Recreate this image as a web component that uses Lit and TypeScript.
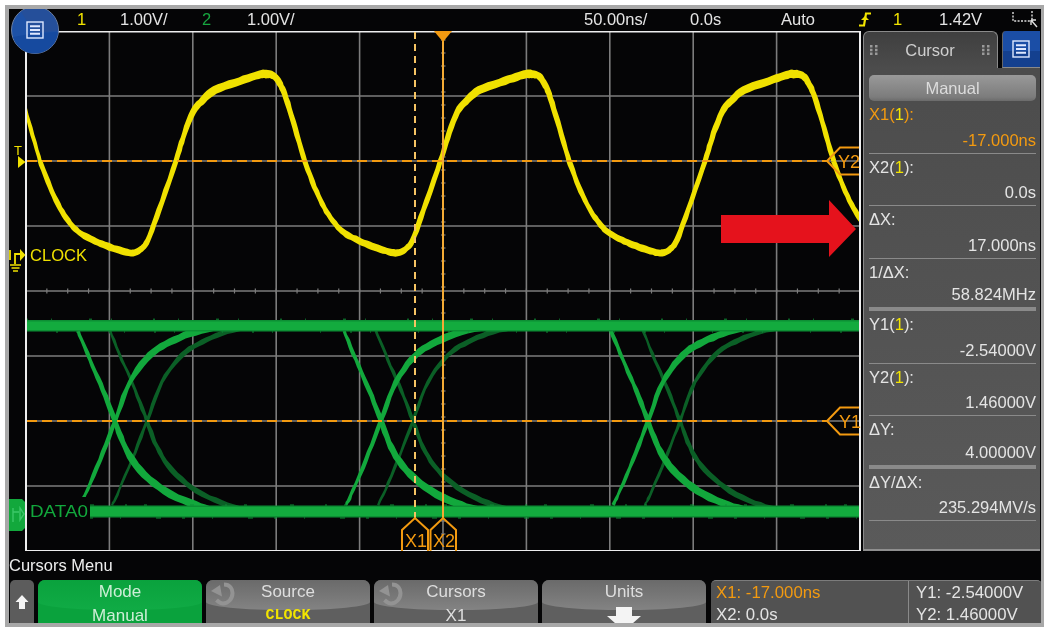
import { LitElement, html, svg, css } from 'lit';
import { customElement } from 'lit/decorators.js';

type Pt = [number, number, number];

// samples a catmull-rom through the points and outlines it with the width of
// each point, plus a bit of jitter so the edge looks like sampled scope data
function ribbon(pts: Pt[], dx = 0, fuzz = 0.3): string {
  const mid: Pt[] = [];
  let seed = 7 + Math.round(dx);
  const rnd = () => {
    seed = (seed * 1103515 + 12345) % 65536;
    return (seed / 65536 - 0.5) * 2 * fuzz;
  };
  for (let i = 0; i < pts.length - 1; i++) {
    const a = pts[i - 1] ?? pts[i];
    const b = pts[i];
    const c = pts[i + 1];
    const e = pts[i + 2] ?? c;
    for (let s = 0; s < 5; s++) {
      const t = s / 5;
      const f = (n: number) =>
        0.5 * (2 * b[n] + (c[n] - a[n]) * t + (2 * a[n] - 5 * b[n] + 4 * c[n] - e[n]) * t * t +
          (3 * b[n] - a[n] - 3 * c[n] + e[n]) * t * t * t);
      mid.push([f(0) + dx, f(1), b[2] + (c[2] - b[2]) * t]);
    }
  }
  const last = pts[pts.length - 1];
  mid.push([last[0] + dx, last[1], last[2]]);
  const left: string[] = [];
  const right: string[] = [];
  mid.forEach((p, i) => {
    const q = mid[Math.min(i + 1, mid.length - 1)];
    const o = mid[Math.max(i - 1, 0)];
    const nx = q[0] - o[0];
    const ny = q[1] - o[1];
    const len = Math.hypot(nx, ny) || 1;
    const h1 = p[2] / 2 + rnd();
    const h2 = p[2] / 2 + rnd();
    left.push(`${(p[0] - (ny / len) * h1).toFixed(1)} ${(p[1] + (nx / len) * h1).toFixed(1)}`);
    right.unshift(`${(p[0] + (ny / len) * h2).toFixed(1)} ${(p[1] - (nx / len) * h2).toFixed(1)}`);
  });
  return `M${left.join('L')}L${right.join('L')}Z`;
}

const scaled = (pts: Pt[], k: number) => pts.map(([x, y, w]) => [x, y, w * k] as Pt);

const PERIOD = 264.5;
const CLOCK: Pt[] = [
  [40, 161, 5], [50, 187, 5], [60, 208, 5], [70, 223, 5.4], [80, 233, 6], [93, 240, 6.5], [107, 246, 7],
  [122, 251, 7], [133, 253, 7], [141, 249, 6], [148, 240, 5.4], [159, 210, 5], [176, 161, 5], [183, 138, 5.2],
  [193, 112, 6], [203, 100, 7], [215, 90, 8], [240, 81, 8], [258, 75, 8], [266, 74, 8.5], [274, 76, 7],
  [280, 84, 6], [286, 98, 5.5], [295, 128, 5],
];

const FALL: Pt[] = [
  [78, 331, 3.5], [90, 360, 4], [103, 390, 4.5], [115, 421, 5], [125, 447, 6], [140, 470, 7],
  [165, 491, 7.5], [195, 505, 7.5], [215, 510, 6],
];
const RISE: Pt[] = [
  [80, 505, 3], [85, 495, 3.5], [100, 460, 4], [115, 421, 4.2], [130, 382, 5], [150, 355, 6.5],
  [170, 342, 7], [195, 332, 7], [225, 326, 5],
];

const VERT = [26, 109.4, 192.8, 276.2, 359.6, 443, 526.4, 609.8, 693.2, 776.6, 860];
const HORZ = [96, 161, 226, 291, 356, 421, 486];
const H_TICKS = Array.from({ length: 40 }, (_, i) => 26 + i * 20.85);
const V_TICKS = Array.from({ length: 39 }, (_, i) => 40 + i * 13);

const ROWS = [
  { label: html`<span class="or">X1(<i>1</i>):</span>`, value: '-17.000ns', orange: true },
  { label: html`X2(<i>1</i>):`, value: '0.0s' },
  { label: html`ΔX:`, value: '17.000ns' },
  { label: html`1/ΔX:`, value: '58.824MHz', thick: true },
  { label: html`Y1(<i>1</i>):`, value: '-2.54000V' },
  { label: html`Y2(<i>1</i>):`, value: '1.46000V' },
  { label: html`ΔY:`, value: '4.00000V', thick: true },
  { label: html`ΔY/ΔX:`, value: '235.294MV/s' },
];

const menuIcon = (cls: string) => html`<svg class=${cls} viewBox="0 0 18 18">
  <rect x="1" y="1" width="16" height="16" fill="none" stroke="#dfe8ff" stroke-width="1.4" />
  <path d="M4 5.3h10M4 9h10M4 12.7h10" stroke="#dfe8ff" stroke-width="2" />
</svg>`;

const rotary = html`<svg class="rotary" viewBox="0 0 26 26">
  <path d="M14 3.5C20 3.5 22.5 8 22.5 12C22.5 18 18 22.5 13 22.5C10.5 22.5 8.5 21 6.5 19" fill="none" stroke="#939393" stroke-width="4" />
  <path d="M1 10L10 4L12 15.5Z" fill="#939393" />
</svg>`;

const grip = html`<svg class="grip" viewBox="0 0 8 10">
  <path d="M0 0h2.5v2.5H0zM5 0h2.5v2.5H5zM0 3.8h2.5v2.5H0zM5 3.8h2.5v2.5H5zM0 7.5h2.5V10H0zM5 7.5h2.5V10H5z" fill="#9a9a9a" />
</svg>`;

@customElement('app-root')
export class AppRoot extends LitElement {
  static styles = css`
    :host {
      display: block;
      width: 1050px;
      height: 631px;
      background: #fff;
      padding: 5px 6px 4px 5px;
      box-sizing: border-box;
      font-family: 'Liberation Sans', Arial, sans-serif;
      color: #e4e4e4;
      font-size: 16.5px;
    }
    .frame {
      position: relative;
      height: 622px;
      box-sizing: border-box;
      border: 4px solid #a8a8a8;
      border-right-width: 3px;
      background: #050506;
      overflow: hidden;
      display: grid;
      grid-template-rows: 22px 520px 29px 43px;
      filter: blur(0.35px);
    }
    .status {
      display: grid;
      grid-template-columns: 43px 82px 45px 337px 106px 91px 77px 35px 46px 73px 30px;
      padding: 0 0 4px 68px;
      align-items: center;
      font-size: 16.5px;
      white-space: nowrap;
    }
    .status svg { display: block; }
    .y { color: #f2e400; }
    .g { color: #17a53f; }
    .main { display: flex; gap: 2px; }
    .plot { display: block; width: 852px; height: 520px; flex: none; }
    .plot text { font-family: 'Liberation Sans', Arial, sans-serif; }
    .menu-btn {
      position: absolute;
      left: 2px;
      top: -3px;
      width: 48px;
      height: 48px;
    }
    .panel {
      width: 177px;
      flex: none;
      box-sizing: border-box;
      border-left: 1.5px solid #8a8a8a;
      border-bottom: 2px solid #8f8f8f;
      display: flex;
      flex-direction: column;
    }
    .tabs { display: flex; height: 37px; flex: none; margin-left: -1.5px; background: #050506; }
    .tab {
      width: 135px;
      box-sizing: border-box;
      display: flex;
      align-items: center;
      justify-content: space-between;
      padding: 0 6px;
      color: #cfcfcf;
      border: 1.5px solid #8a8a8a;
      border-bottom: none;
      border-radius: 6px 6px 0 0;
      background: linear-gradient(#3f3f3f, #4c4c4c);
    }
    .grip { width: 8px; height: 10px; }
    .blue-tab {
      margin-left: 4px;
      flex: 1;
      display: flex;
      align-items: center;
      justify-content: center;
      background: linear-gradient(#1b4ea6 55%, #14408f 55%);
      border-bottom: 1.5px solid #8a8a8a;
      border-left: 1.5px solid #666;
      border-radius: 4px 0 0 0;
    }
    .blue-icon { width: 18px; height: 18px; }
    .strip {
      background: linear-gradient(#4c4c4c, #535353 50%, #5a5a5a);
      flex: 1;
      display: flex;
      flex-direction: column;
      padding: 0 4px 0 5px;
    }
    .manual {
      margin-top: 7px;
      height: 26px;
      flex: none;
      box-sizing: border-box;
      display: flex;
      align-items: center;
      justify-content: center;
      border-radius: 5px;
      color: #dcdcdc;
      background: linear-gradient(#999, #7c7c7c 85%, #6b6b6b);
    }
    .row {
      height: 52.5px;
      flex: none;
      box-sizing: border-box;
      border-bottom: 1.5px solid #8a8a8a;
      display: flex;
      flex-direction: column;
      justify-content: space-between;
      padding: 3px 0 3px;
      line-height: 20px;
    }
    .row.thick { border-bottom: 4px solid #8a8a8a; }
    .row i { font-style: normal; color: #f2e400; }
    .row .or { color: #f39a10; }
    .value { text-align: right; }
    .value.or { color: #f39a10; }
    .title { display: flex; align-items: center; color: #eee; }
    .keys { display: flex; gap: 4px; padding: 0 0 0 1px; }
    .back {
      width: 24px;
      flex: none;
      display: flex;
      align-items: center;
      justify-content: center;
      background: #5c5c5c;
      border-radius: 5px 5px 0 0;
    }
    .back svg { width: 14px; height: 16px; }
    .key {
      position: relative;
      width: 164px;
      flex: none;
      box-sizing: border-box;
      height: 43px;
      border-radius: 7px 7px 0 0;
      background: #5f5f5f;
      text-align: center;
      line-height: 24px;
      color: #dedede;
      font-size: 17px;
    }
    .key::before {
      content: '';
      position: absolute;
      left: 0;
      right: 0;
      top: 0;
      height: 30px;
      border-radius: 7px 7px 50% 50% / 7px 7px 8px 8px;
      background: linear-gradient(#6a6a6a, #838383);
    }
    .key.on { background: #0aa23d; color: #cdeed6; }
    .key.on::before { background: linear-gradient(#0aa23d, #10ab45); }
    .key > * { position: relative; }
    .key > div { display: block; }
    .key > .low { line-height: 15px; margin-top: 4px; }
    .key > .rotary { position: absolute; left: 4px; top: 1px; width: 26px; height: 26px; }
    .clock { font-family: 'Liberation Mono', monospace; font-weight: bold; color: #f2e400; font-size: 15px; }
    .down { display: block; margin: 3px auto 0; width: 36px; height: 16px; }
    .read {
      flex: 1;
      margin-left: 1px;
      height: 43px;
      box-sizing: border-box;
      display: flex;
      background: #525252;
      border-radius: 5px 5px 0 0;
      border-top: 1.5px solid #7c7c7c;
      line-height: 23px;
      font-size: 16.8px;
    }
    .read > div { padding: 0 0 0 5px; white-space: nowrap; }
    .read .a { width: 198px; box-sizing: border-box; border-right: 1.5px solid #8a8a8a; }
    .read .b { padding-left: 7px; }
    .read .or { color: #f39a10; }
    .read .low { line-height: 15px; margin-top: 3px; }
  `;

  private plot() {
    const eyes = [0, 266, 533];
    const dimFall = scaled(FALL, 0.72);
    const dimRise = scaled(RISE, 0.72);
    return svg`
      <defs><clipPath id="scr"><rect x="26" y="31" width="834" height="520" /></clipPath></defs>
      <g stroke="#7c7c7c" stroke-width="1.6" fill="none">
        ${VERT.slice(1, 10).map((x) => svg`<path d="M${x} 31V551" />`)}
        ${HORZ.map((y) => svg`<path d="M26 ${y}H860" />`)}
        ${H_TICKS.map((x) => svg`<path d="M${x} 288.5V293.5" stroke-width="1.2" />`)}
        ${V_TICKS.map((y) => svg`<path d="M441 ${y}H445.5" stroke-width="1.2" />`)}
      </g>
      <g clip-path="url(#scr)">
        <path fill="#f0e100" d=${[-1, 0, 1, 2, 3].map((k) => ribbon([...CLOCK, [CLOCK[0][0] + PERIOD, CLOCK[0][1], 5]], k * PERIOD)).join(' ')} />
        <g fill="#0b5f26">
          ${eyes.map((o) => svg`
            <path d=${ribbon(dimFall, o + 32, 0.4)} />
            <path d=${ribbon(dimRise, o + 32, 0.4)} />`)}
        </g>
        <g fill="#12a83c">
          ${eyes.map((o) => svg`
            <path d=${ribbon(FALL, o, 0.4)} />
            <path d=${ribbon(RISE, o, 0.4)} />`)}
        </g>
        <g fill="none" stroke="#0d8f34" stroke-width="1">
          <path d="M26 319.2H860" stroke-dasharray="2 23 1 37 3 19 1 41" />
          <path d="M26 332H860" stroke-dasharray="1 29 2 18 1 47" />
          <path d="M90 505H860" stroke-dasharray="4 31 2 17 3 43" />
          <path d="M90 518H860" stroke-dasharray="3 27 1 35 5 21" />
        </g>
        <rect x="26" y="320" width="834" height="11.5" fill="#0d8f34" />
        <rect x="26" y="321.5" width="834" height="8.5" fill="#13ab3e" />
        <rect x="26" y="497" width="64" height="24" fill="#050506" />
        <rect x="90" y="505.5" width="770" height="12" fill="#0d8f34" />
        <rect x="90" y="507" width="770" height="9" fill="#13ab3e" />
      </g>
      <path d="M26 31.5H860V551H26Z" fill="none" stroke="#eee" stroke-width="2" />

      <g fill="none" stroke="#f39a10" stroke-width="2">
        <path d="M27 161H828M27 421H828" stroke-dasharray="10 5" />
        <path d="M415 32V518" stroke="#f6c463" stroke-dasharray="7 5" />
        <path d="M443 32V518" stroke="#f4ab35" />
        <path d="M859 147.5H840L827 161 840 174.5H859" />
        <path d="M859 407.5H840L827 421 840 434.5H859" />
        <path d="M402 551V530L415 518 428 530V551" />
        <path d="M430.5 551V530L443 518 456 530V551" />
      </g>
      <path d="M434 31H452L443 42Z" fill="#f39a10" />
      <g fill="#f39a10" font-size="18">
        <text x="838" y="168">Y2</text>
        <text x="839" y="428">Y1</text>
        <text x="405" y="547">X1</text>
        <text x="433" y="547">X2</text>
      </g>

      <text x="30" y="261" font-size="17" fill="#f0e100" textLength="57" lengthAdjust="spacingAndGlyphs">CLOCK</text>
      <text x="30" y="517" font-size="17" fill="#12a83c" textLength="58" lengthAdjust="spacingAndGlyphs">DATA0</text>
      <text x="14" y="155" font-size="13" fill="#f0e100">T</text>
      <path d="M18 156L25.5 162 18 168Z" fill="#f0e100" />
      <path d="M10 250V260M15 264V254H21" fill="none" stroke="#f0e100" stroke-width="1.8" />
      <path d="M20 249L25.5 255 20 261Z" fill="#f0e100" />
      <path d="M10 265H21M11.5 268H19.5M13 271H18" stroke="#f0e100" stroke-width="1.4" />
      <path d="M9 499H22L25 502V528L22 531H9Z" fill="#12a83c" />
      <path d="M13 508V522M13 512H19M20 508L24 514 20 520Z" fill="none" stroke="#3cc768" stroke-width="1.4" />

      <path d="M721 215H829V200L856 229 829 257V243H721Z" fill="#e5121c" />
    `;
  }

  render() {
    return html`
      <div class="frame">
        <div class="status">
          <span class="y">1</span><span>1.00V/</span>
          <span class="g">2</span><span>1.00V/</span>
          <span>50.00ns/</span><span>0.0s</span><span>Auto</span>
          <svg width="14" height="16" viewBox="0 0 14 16">
            <path d="M1 14.5H6L8 2.5H13" fill="none" stroke="#f2e400" stroke-width="2.2" />
            <path d="M3 9H11L7 5Z" fill="#f2e400" />
          </svg>
          <span class="y">1</span><span>1.42V</span>
          <svg width="26" height="20" viewBox="0 0 26 20">
            <path d="M1 3V12H21M20 2V12" fill="none" stroke="#ddd" stroke-width="1.4" stroke-dasharray="2 1.4" />
            <path d="M19 11L25 18M19 11V16M19 11H24" fill="none" stroke="#ddd" stroke-width="1.4" />
          </svg>
        </div>

        <div class="main">
          <svg class="plot" viewBox="9 31 852 520">${this.plot()}</svg>
          <div class="panel">
            <div class="tabs">
              <div class="tab">${grip}<span>Cursor</span>${grip}</div>
              <div class="blue-tab">${menuIcon('blue-icon')}</div>
            </div>
            <div class="strip">
              <div class="manual">Manual</div>
              ${ROWS.map((r) => html`
                <div class="row ${r.thick ? 'thick' : ''}">
                  <div>${r.label}</div>
                  <div class="value ${r.orange ? 'or' : ''}">${r.value}</div>
                </div>`)}
            </div>
          </div>
        </div>

        <div class="title">Cursors Menu</div>

        <div class="keys">
          <div class="back">
            <svg viewBox="0 0 14 16"><path d="M7 1L13.5 8H10V15H4V8H.5Z" fill="#f4f4f4" /></svg>
          </div>
          <div class="key on"><div>Mode</div><div class="low">Manual</div></div>
          <div class="key">${rotary}<div>Source</div><div class="low clock">CLOCK</div></div>
          <div class="key">${rotary}<div>Cursors</div><div class="low">X1</div></div>
          <div class="key">
            <div>Units</div>
            <svg class="down" viewBox="0 0 36 16"><path d="M10 0H26V9H35L18 24 1 9H10Z" fill="#f4f4f4" /></svg>
          </div>
          <div class="read">
            <div class="a"><div class="or">X1: -17.000ns</div><div class="low">X2: 0.0s</div></div>
            <div class="b"><div>Y1: -2.54000V</div><div class="low">Y2: 1.46000V</div></div>
          </div>
        </div>

        <svg class="menu-btn" viewBox="0 0 48 48">
          <circle cx="24" cy="24" r="23.5" fill="#1d51a6" stroke="#6d7fa0" />
          <path d="M24 27L47 25A23 23 0 0 0 10 6Z" fill="#254f9a" />
          <path d="M24 27L47 26A23 23 0 0 1 2 31Z" fill="#164a9f" />
          <g transform="translate(15 15)">
            <rect x="1" y="1" width="16" height="16" fill="none" stroke="#dfe8ff" stroke-width="1.4" />
            <path d="M4 5.3h10M4 9h10M4 12.7h10" stroke="#dfe8ff" stroke-width="2" />
          </g>
        </svg>
      </div>
    `;
  }
}
